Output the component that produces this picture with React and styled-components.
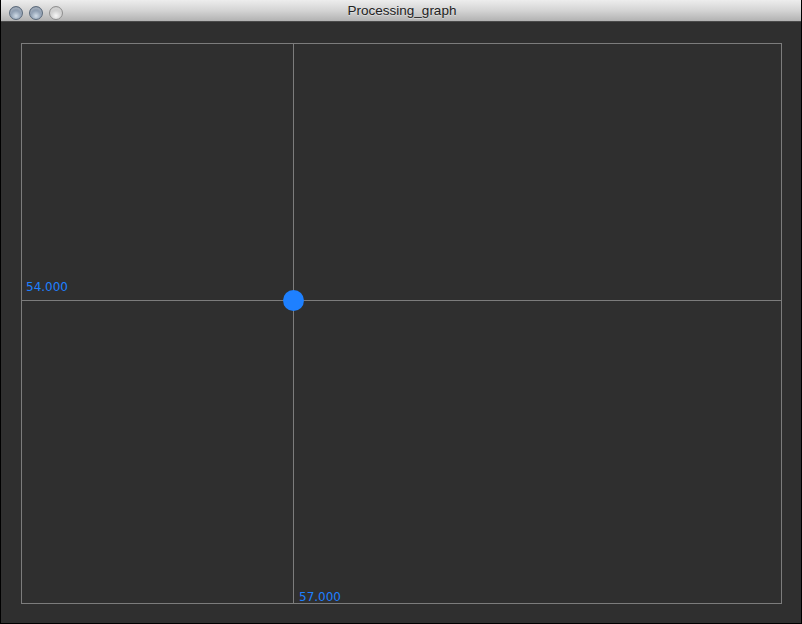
import React from "react";
import styled, { createGlobalStyle } from "styled-components";

const GlobalStyle = createGlobalStyle`
	html, body {
		margin: 0;
		padding: 0;
		background: #000;
	}
`;

const App = () => {
	const lights = [{ tone: "graphite" }, { tone: "graphite" }, { tone: "idle" }];

	return (
		<>
			<GlobalStyle />
			<Window>
				<TitleBar>
					<Lights>
						{lights.map((l, i) => (
							<Light key={i} $tone={l.tone} />
						))}
					</Lights>
					<Title>Processing_graph</Title>
				</TitleBar>
				<Canvas>
					<Graph width="800" height="601" viewBox="0 0 800 601">
						<rect x="20.5" y="21.5" width="760" height="560" fill="none" stroke="#7c7c7c" />
						<line x1="292.5" y1="21.5" x2="292.5" y2="581.5" stroke="#7c7c7c" />
						<line x1="20.5" y1="278.5" x2="780.5" y2="278.5" stroke="#7c7c7c" />
						<circle cx="292.5" cy="278.5" r="10.5" fill="#1e80ff" />
						<text x="25" y="269" className="label">
							54.000
						</text>
						<text x="298" y="579" className="label">
							57.000
						</text>
					</Graph>
				</Canvas>
			</Window>
		</>
	);
};

// # STYLED COMPONENTS

const Window = styled.div`
	width: 802px;
	height: 624px;
	box-sizing: border-box;
	display: flex;
	flex-direction: column;
	border: 1px solid #000;
	border-top: none;
	background: #2f2f2f;
	overflow: hidden;
`;

const TitleBar = styled.div`
	position: relative;
	height: 22px;
	flex: none;
	display: flex;
	align-items: center;
	justify-content: center;
	background: linear-gradient(#ededed, #d4d4d4 50%, #b2b2b2);
	border-bottom: 1px solid #4a4a4a;
	box-sizing: border-box;
`;

const Lights = styled.div`
	position: absolute;
	left: 8px;
	top: 6px;
	display: flex;
	gap: 6px;
`;

const Light = styled.span`
	width: 14px;
	height: 14px;
	border-radius: 50%;
	box-sizing: border-box;
	border: 1px solid ${(p) => (p.$tone === "idle" ? "#909090" : "#5c6b7c")};
	background: ${(p) =>
		p.$tone === "idle"
			? "radial-gradient(circle at 50% 72%, #f6f6f6, #cfcfcf 50%, #a4a4a4)"
			: "radial-gradient(circle at 50% 74%, #cfdbe6, #8c9cb0 50%, #5c6c80)"};
	box-shadow: inset 0 2px 2px rgba(255, 255, 255, 0.35);
`;

const Title = styled.span`
	font-family: "Liberation Sans", Arial, sans-serif;
	font-size: 13.5px;
	color: #222;
	margin-left: 2px;
	text-shadow: 0 1px 0 rgba(255, 255, 255, 0.4);
`;

const Canvas = styled.div`
	flex: 1;
	display: flex;
`;

const Graph = styled.svg`
	display: block;

	.label {
		font-family: "DejaVu Sans", sans-serif;
		font-size: 12px;
		fill: #1e80ff;
	}
`;

export default App;
